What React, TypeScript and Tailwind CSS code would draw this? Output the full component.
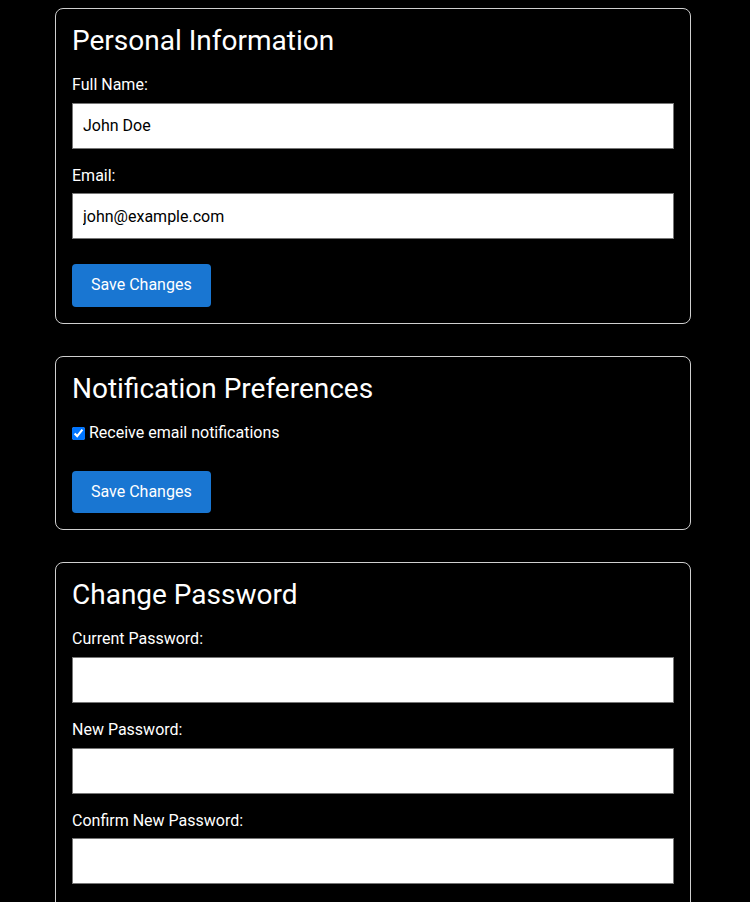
import React from "react";

const font = { fontFamily: "Roboto, 'Liberation Sans', sans-serif" };

function Field({ label, value, type = "text" }: { label: string; value?: string; type?: string }) {
  return (
    <div className="mb-[18px]">
      <label className="block mb-2 text-[16px] leading-[18.75px] text-white">{label}</label>
      <input
        type={type}
        defaultValue={value}
        className="block w-full h-[46px] px-[10px] bg-white text-black text-[16px] border border-[#767676] outline-none"
      />
    </div>
  );
}

function Card({ title, children }: { title: string; children: React.ReactNode }) {
  return (
    <section className="border border-[#cfcfcf] rounded-[8px] p-4 mb-8">
      <h2 className="text-[28px] leading-[32.8px] font-normal text-white mb-[18px]">{title}</h2>
      {children}
    </section>
  );
}

function SaveButton() {
  return (
    <button className="bg-[#1976d2] text-white text-[16px] leading-[18.75px] px-[19px] py-3 rounded-[4px]">
      Save Changes
    </button>
  );
}

export default function App() {
  return (
    <div className="min-h-screen bg-black pt-2 pl-[55px]" style={font}>
      <div className="w-[636px]">
        <Card title="Personal Information">
          <Field label="Full Name:" value="John Doe" />
          <Field label="Email:" value="john@example.com" type="email" />
          <div className="mt-[25px]">
            <SaveButton />
          </div>
        </Card>
        <Card title="Notification Preferences">
          <label className="mt-[2px] flex items-center gap-[4px] text-white text-[16px] leading-[18.75px]">
            <input type="checkbox" defaultChecked className="w-[13px] h-[13px]" />
            Receive email notifications
          </label>
          <div className="mt-[28px]">
            <SaveButton />
          </div>
        </Card>
        <Card title="Change Password">
          <Field label="Current Password:" type="password" />
          <Field label="New Password:" type="password" />
          <Field label="Confirm New Password:" type="password" />
          <div className="mt-[25px]">
            <SaveButton />
          </div>
        </Card>
      </div>
    </div>
  );
}
